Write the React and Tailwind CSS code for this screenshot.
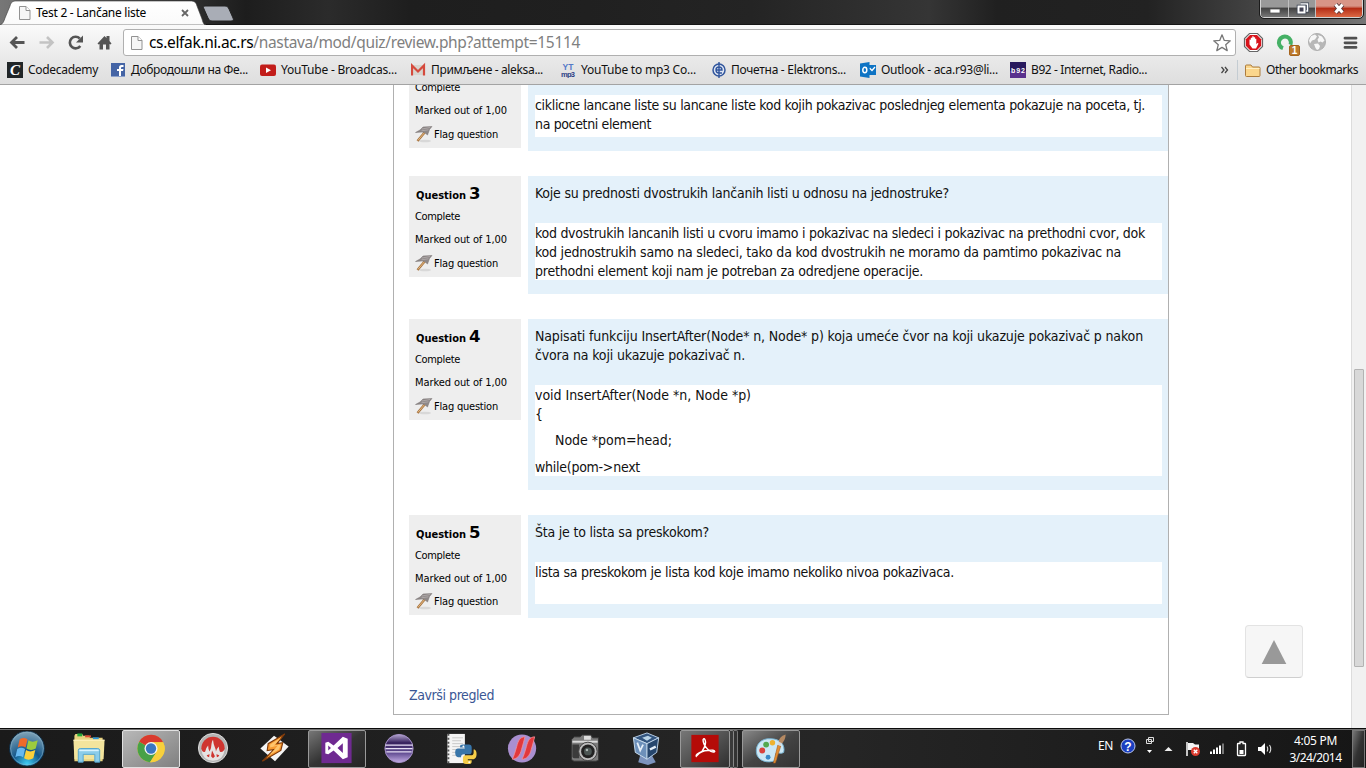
import { useLayoutEffect, useRef } from "react";

/* Single line of text spread to a given width by letter spacing. */
function Line({ w, className = "", children }) {
  const ref = useRef(null);
  useLayoutEffect(() => {
    const el = ref.current;
    el.style.letterSpacing = "0px";
    const natural = el.getBoundingClientRect().width;
    el.style.letterSpacing = (w - natural) / el.textContent.length + "px";
  }, [w]);
  return (
    <span className={"block w-max whitespace-pre " + className} ref={ref}>
      {children}
    </span>
  );
}

const ui = "font-['Noto_Sans','Open_Sans',sans-serif]";

function PageIcon() {
  return (
    <svg width="12" height="16" viewBox="0 0 12 16" className="shrink-0">
      <path d="M.5 1.5h6.5l4 4v9h-10.500z" fill="#f6f6f6" stroke="#929292" />
      <path d="M7 1.500v4h4" fill="#fff" stroke="#929292" />
    </svg>
  );
}

function WindowButtons() {
  return (
    <div className="absolute left-[1260px] top-0 flex h-[18px] w-[103px] overflow-hidden rounded-b-[4px] border border-t-0 border-[#d3d3d3] bg-[#555] outline outline-[#1b1b1b]">
      <div className="flex w-[28px] items-center justify-center border-r border-[#c0c0c0] bg-linear-to-b from-[#999] from-40% via-[#444] via-50% to-[#777]">
        <svg width="12" height="16"><rect x="1" y="8" width="10" height="4" fill="#fff" stroke="#555" strokeWidth=".8" /></svg>
      </div>
      <div className="flex w-[27px] items-center justify-center border-r border-[#c0c0c0] bg-linear-to-b from-[#999] from-40% via-[#444] via-50% to-[#777]">
        <svg width="13" height="15" viewBox="0 0 13 15">
          <path d="M4.500 3h7v7h-2" fill="none" stroke="#384050" strokeWidth="3" />
          <path d="M4.500 3h7v7h-2" fill="none" stroke="#fff" strokeWidth="1.500" />
          <rect x="2.500" y="5.500" width="6" height="6" fill="#445" stroke="#384050" strokeWidth="3.500" />
          <rect x="2.500" y="5.500" width="6" height="6" fill="#445" stroke="#fff" strokeWidth="2" />
        </svg>
      </div>
      <div className="flex flex-1 items-center justify-center bg-linear-to-b from-[#d89587] from-35% via-[#b52d16] via-50% to-[#dc6844]">
        <svg width="14" height="14" viewBox="0 0 14 14">
          <path d="M3.500 2.500l7 8M10.500 2.500l-7 8" stroke="#583a3c" strokeWidth="4.800" />
          <path d="M3.500 2.500l7 8M10.500 2.500l-7 8" stroke="#fff" strokeWidth="3" />
        </svg>
      </div>
    </div>
  );
}

function TabStrip() {
  return (
    <div className="relative flex h-[25px] bg-[#202020]">
      <svg width="1366" height="25" className="absolute left-0 top-0">
        <defs>
          <linearGradient id="shine" x1="0" x2="1">
            <stop offset="0" stopColor="#777" />
            <stop offset=".15" stopColor="#2a2a2a" />
            <stop offset=".18" stopColor="#1d1d1d" />
            <stop offset=".24" stopColor="#2b2b2b" />
            <stop offset=".3" stopColor="#1e1e1e" />
            <stop offset=".43" stopColor="#202020" />
            <stop offset=".55" stopColor="#242424" />
            <stop offset=".68" stopColor="#353535" />
            <stop offset=".73" stopColor="#202020" />
            <stop offset=".84" stopColor="#222" />
            <stop offset=".92" stopColor="#444" />
            <stop offset="1" stopColor="#777" />
          </linearGradient>
          <linearGradient id="tabfill" x2="0" y2="1">
            <stop stopColor="#fff" />
            <stop offset="1" stopColor="#fafafa" />
          </linearGradient>
        </defs>
        <rect width="1366" height="25" fill="url(#shine)" />
        <path d="M0 25c3-1 4-4 5-7l5-12c1-4 3-5 6-5h174c4 0 6 1 7 5l5 13c1 4 2 6 4 6z" fill="url(#tabfill)" stroke="#3b3b3b" strokeWidth=".6" />
        <path d="M205 6h20c2 0 3 1 4 3l4 9c1 2 0 3-2 3h-19c-2 0-3-1-4-3l-4-9c-1-2-1-3 1-3z" fill="#a9adb6" stroke="#222" />
        <path d="M206 24.500H1366" stroke="#151515" />
      </svg>
      <div className={"relative ml-[19px] flex items-center pt-px text-[12px] text-black " + ui}>
        <PageIcon />
        <Line w={110} className="ml-[5px]">Test 2 - Lančane liste</Line>
        <svg width="8" height="8" viewBox="0 0 8 8" className="ml-[35px]">
          <path d="M1 1l6 6M7 1l-6 6" stroke="#666" strokeWidth="1.800" />
        </svg>
      </div>
      <WindowButtons />
    </div>
  );
}

function NavIcons() {
  return (
    <svg width="122" height="35" viewBox="0 25 122 35" className="shrink-0">
      <path d="M24.500 42.500H12M17 37l-5.500 5.500L17 48" fill="none" stroke="#555" strokeWidth="2.800" />
      <path d="M39.500 42.500H52M47 37l5.500 5.500L47 48" fill="none" stroke="#c3c3c3" strokeWidth="2.600" />
      <path d="M80.300 46a5.800 5.800 0 1 1-.5-7.500" fill="none" stroke="#555" strokeWidth="2.600" />
      <path d="M83 35.500v7h-7z" fill="#555" />
      <path d="M97.500 43.500l7-7.500 2 2v-2h3v5l2 2.500-1 1-1-.5v5.500h-3.500v-5h-3v5h-3.500v-5.500l-1 .5z" fill="#555" />
    </svg>
  );
}

function Toolbar() {
  return (
    <div className={"flex h-[35px] bg-linear-to-b from-[#fafafa] to-[#e9e9e9] " + ui}>
      <NavIcons />
      <div className="ml-[1px] mt-[4px] flex h-[27px] w-[1113px] items-center rounded-[3px] border border-[#b0b0b0] bg-white pl-[7px]">
        <PageIcon />
        <Line w={431} className="ml-[6px] text-[15.500px] text-[#808080]">
          <span className="text-black">cs.elfak.ni.ac.rs</span>/nastava/mod/quiz/review.php?attempt=15114
        </Line>
        <svg width="20" height="20" viewBox="0 0 20 20" className="ml-auto mr-[3px]">
          <path d="M10 1.800l2.300 5.600 6 .4-4.600 3.900 1.500 5.900-5.200-3.200-5.200 3.200 1.500-5.900-4.600-3.900 6-.4z" fill="#fff" stroke="#777" strokeWidth="1.300" strokeLinejoin="round" />
        </svg>
      </div>
      <svg width="130" height="35" viewBox="1236 25 130 35" className="shrink-0">
        <path d="M1249.500 33.500h8l5 5v8l-5 5h-8l-5-5v-8z" fill="#fff" stroke="#666" strokeWidth="1.200" />
        <path d="M1250 35h7l4.200 4.200v6.600l-4.200 4.200h-7l-4.200-4.200v-6.600z" fill="#d8141c" />
        <path d="M1249.500 39.500v5l3 4h3.500l2.500-5-1.200-.6-1 1.400v-5.500h-1.200v-1.500h-1.500v-1h-1.300v1.500h-1.500v2z" fill="#fff" />
        <path d="M1283 48.200a6 6 0 1 1 7.500-3.500" fill="none" stroke="#45b065" strokeWidth="4" />
        <rect x="1289.500" y="45.500" width="10" height="10" rx="1.500" fill="#bd7b2d" stroke="#a5631c" />
        <text x="1294.500" y="54" fontSize="10" fontWeight="bold" textAnchor="middle" fill="#fff" fontFamily="Liberation Sans">1</text>
        <circle cx="1317" cy="42" r="8.500" fill="#b7b7b7" stroke="#b0b0b0" />
        <path d="M1311 36l4-1.500 2 2-2 3-3 1-2 3-1-3zM1318 35l4 1.500 2.500 4-2 2-2-1-2 1-1-3 1.500-2zM1314 44l4-.5 2 2.500-1 3-2 1-1.500-2z" fill="#f7f7f7" />
        <path d="M1345 38.200h11M1345 42.800h11M1345 47.400h11" stroke="#505050" strokeWidth="2.800" strokeLinecap="round" />
      </svg>
    </div>
  );
}

const bookmarkIcons = {
  code: (
    <>
      <rect width="16" height="16" fill="#202527" />
      <text x="8" y="13" textAnchor="middle" fontSize="15" fontStyle="italic" fontWeight="bold" fontFamily="Liberation Serif" fill="#fff">C</text>
    </>
  ),
  fb: (
    <>
      <rect y="1" width="14" height="14" fill="#4464a5" />
      <path d="M0 14.500h14" stroke="#8ba0cb" />
      <path d="M8 14V9H6V7h2V5.500Q8 3 10.500 3H12.500v2H11q-1 0-1 1v1h2.500L12 9h-2v5z" fill="#fff" />
    </>
  ),
  yt: (
    <>
      <rect y="2.500" width="16" height="11.500" rx="2" fill="#c21d1a" />
      <path d="M6 5.500l5 2.800-5 2.800z" fill="#fff" />
    </>
  ),
  gmail: (
    <>
      <path d="M0 3h14v10H0z" fill="#d8d5cf" />
      <path d="M1 13.500V3.500l6 6 6-6v10" fill="none" stroke="#d54a3d" strokeWidth="2.200" />
    </>
  ),
  mp3: (
    <g fontFamily="Liberation Sans" fontWeight="bold" textAnchor="middle">
      <text x="7" y="7.500" fontSize="8.500" fill="#5479c8">YT</text>
      <text x="7" y="14.500" fontSize="7.500" fill="#2c3e86" textLength="14">mp3</text>
    </g>
  ),
  el: (
    <>
      <circle cx="7" cy="8" r="6" fill="#dfe6f3" stroke="#31569d" strokeWidth="1.500" />
      <path d="M7 0v16M4 8h6q0-3-3-3t-3 3 3 3h3" fill="none" stroke="#31569d" strokeWidth="1.400" />
    </>
  ),
  outlook: (
    <>
      <rect x="8" y="3.500" width="7.500" height="9" fill="#0f74c4" stroke="#0f74c4" />
      <path d="M9.500 6l2.500 2.500 3-3.500" fill="none" stroke="#fff" strokeWidth="1.300" />
      <path d="M0 1.500L9.500 0v16L0 14.500z" fill="#0f74c4" />
      <ellipse cx="4.800" cy="8" rx="2" ry="2.700" fill="none" stroke="#fff" strokeWidth="1.500" />
    </>
  ),
  b92: (
    <>
      <rect width="16" height="16" fill="#28195d" />
      <rect y="9" width="16" height="7" fill="#59308d" />
      <text x="8" y="10.500" textAnchor="middle" fontSize="7" fontWeight="bold" fontFamily="Liberation Sans" fill="#fff" textLength="14">b92</text>
    </>
  ),
};

const bookmarks = [
  { icon: "code", text: "Codecademy", w: 70, pos: "w-[104px]", gap: "w-[21px]" },
  { icon: "fb", text: "Добродошли на Фе...", w: 117, pos: "w-[149px]", gap: "w-[20px]" },
  { icon: "yt", text: "YouTube - Broadcas...", w: 116, pos: "w-[151px]", gap: "w-[21px]" },
  { icon: "gmail", text: "Примљене - aleksa...", w: 112, pos: "w-[150px]", gap: "w-[20px]" },
  { icon: "mp3", text: "YouTube to mp3 Co...", w: 115, pos: "w-[151px]", gap: "w-[20px]" },
  { icon: "el", text: "Почетна - Elektrons...", w: 115, pos: "w-[148px]", gap: "w-[19px]" },
  { icon: "outlook", text: "Outlook - aca.r93@li...", w: 117, pos: "w-[150px]", gap: "w-[21px]" },
  { icon: "b92", text: "B92 - Internet, Radio...", w: 116, pos: "w-[211px]", gap: "w-[21px]" },
];

function Bookmarks() {
  return (
    <div className={"flex h-[25px] items-center border-b border-[#a3a3a3] bg-linear-to-b from-[#e8e8e8] to-[#dedede] pb-[4px] pl-[7px] text-[12px] leading-[20px] text-[#111] " + ui}>
      {bookmarks.map((b) => (
        <div key={b.icon} className={"flex shrink-0 items-center " + b.pos}>
          <div className={"shrink-0 " + b.gap}>
            <svg width="16" height="16">{bookmarkIcons[b.icon]}</svg>
          </div>
          <Line w={b.w}>{b.text}</Line>
        </div>
      ))}
      <svg width="8" height="8" viewBox="0 0 8 8">
        <path d="M.5 1l2.500 3-2.500 3M4 1l2.500 3L4 7" fill="none" stroke="#444" strokeWidth="1.300" />
      </svg>
      <div className="ml-[8px] h-[20px] w-px bg-[#c4ccd2]" />
      <svg width="16" height="15" viewBox="0 0 16 15" className="ml-[7px]">
        <path d="M.5 12.500V3q0-1 1-1h4.500l1.500 2H14q1 0 1 1v7.500q0 1-1 1H1.500q-1 0-1-1z" fill="#fbd68c" stroke="#ac7c3d" />
        <path d="M1 5.500h13.500" stroke="#fff0c4" />
      </svg>
      <Line w={92} className="ml-[5px]">Other bookmarks</Line>
    </div>
  );
}

function FlagIcon() {
  return (
    <svg width="18" height="18" viewBox="0 0 18 18" className="shrink-0">
      <ellipse cx="10" cy="15" rx="6" ry="1.300" fill="#d8d8d8" />
      <path d="M2.500 15L10 6" stroke="#a77543" strokeWidth="2.400" />
      <path d="M3 14.300L10 6" stroke="#ecc083" strokeWidth=".9" />
      <path d="M.5 6.500L5 4l3-3 9-.500-2.500 3L12.500 9 9.500 6.500 7 6z" fill="#8f8989" stroke="#777171" strokeWidth=".5" />
      <path d="M7 3l8-1.500M6.500 4.800l7-1" stroke="#b5afaf" strokeWidth=".8" />
    </svg>
  );
}

const tahoma = "font-['DejaVu_Sans_Condensed','DejaVu_Sans','Noto_Sans',sans-serif]";

function Info({ n, last }) {
  return (
    <div className={"w-[112px] shrink-0 bg-[#eee] pl-[6px] text-[11px] leading-[14px] text-black " + (last ? "h-[100px]" : "h-[101px]")}>
      <div className="flex h-[34px] items-baseline gap-[3px] pl-px pt-[8px] font-bold">
        {n && (
          <>
            <Line w={50}>Question</Line>
            <Line w={11} className="font-['DejaVu_Sans',sans-serif] text-[16.500px] leading-[20px]">{n}</Line>
          </>
        )}
      </div>
      <Line w={45}>Complete</Line>
      <Line w={92} className="mt-[9px]">Marked out of 1,00</Line>
      <div className={"flex items-center " + (last ? "mt-[7px]" : "mt-[8px]")}>
        <FlagIcon />
        <Line w={64} className="ml-px">Flag question</Line>
      </div>
    </div>
  );
}

function Question({ n, prompt, height, answer, answerHeight, last }) {
  return (
    <div className="mb-[25px] flex items-start gap-[7px]">
      <Info n={n} last={last} />
      <div className={"w-[640px] bg-[#e4f1fa] pl-[7px] pt-[8px] " + height}>
        {prompt}
        <div className={"mr-[6px] mt-[20px] bg-white pt-px " + answerHeight}>{answer}</div>
      </div>
    </div>
  );
}

function Page() {
  return (
    <div className="flex h-[643px] overflow-hidden bg-white">
      <div className="ml-[393px] h-[630px] w-[776px] overflow-hidden border border-t-0 border-[#b0b0b0] pl-[15px]">
        <div className={"-mt-[38px] text-[14px] leading-[19px] text-[#111] " + tahoma}>
          <Question
            height="h-[104px]"
            answerHeight="h-[42px]"
            prompt={<div className="h-[20px]" />}
            answer={
              <>
                <Line w={610}>ciklicne lancane liste su lancane liste kod kojih pokazivac poslednjeg elementa pokazuje na poceta, tj.</Line>
                <Line w={116}>na pocetni element</Line>
              </>
            }
          />
          <Question
            n="3"
            height="h-[118px]"
            answerHeight="h-[57px]"
            prompt={<Line w={414}>Koje su prednosti dvostrukih lančanih listi u odnosu na jednostruke?</Line>}
            answer={
              <>
                <Line w={610}>kod dvostrukih lancanih listi u cvoru imamo i pokazivac na sledeci i pokazivac na prethodni cvor, dok</Line>
                <Line w={586}>kod jednostrukih samo na sledeci, tako da kod dvostrukih ne moramo da pamtimo pokazivac na</Line>
                <Line w={388}>prethodni element koji nam je potreban za odredjene operacije.</Line>
              </>
            }
          />
          <Question
            n="4"
            height="h-[171px]"
            answerHeight="h-[91px]"
            prompt={
              <>
                <Line w={608}>Napisati funkciju InsertAfter(Node* n, Node* p) koja umeće čvor na koji ukazuje pokazivač p nakon</Line>
                <Line w={210}>čvora na koji ukazuje pokazivač n.</Line>
              </>
            }
            answer={
              <>
                <Line w={216}>void InsertAfter(Node *n, Node *p)</Line>
                <Line w={7}>{"{"}</Line>
                <Line w={117} className="ml-[20px] mt-[7px]">Node *pom=head;</Line>
                <Line w={105} className="mt-[8px]">{"while(pom->next"}</Line>
              </>
            }
          />
          <Question
            n="5"
            last
            height="h-[103px]"
            answerHeight="h-[42px]"
            prompt={<Line w={174}>Šta je to lista sa preskokom?</Line>}
            answer={<Line w={419}>lista sa preskokom je lista kod koje imamo nekoliko nivoa pokazivaca.</Line>}
          />
          <Line w={85} className="mt-[68px] text-[#3a5795]">Završi pregled</Line>
        </div>
      </div>
      <div className="ml-[76px] mt-[540px] flex h-[53px] w-[58px] items-center justify-center rounded-[4px] border border-[#e3e3e3] border-b-[#cfcfcf] bg-[#f6f6f6]">
        <svg width="26" height="26"><path d="M13 1l12.300 24H.7z" fill="#999" /></svg>
      </div>
      <div className="ml-auto w-[15px] border-l border-[#dcdcdc] bg-[#f1f1f1] pl-[2px] pt-[284px]">
        <div className="h-[298px] w-[10px] rounded-[1px] border border-[#b3b3b3] bg-[#d8d8d8]" />
      </div>
    </div>
  );
}

/* Taskbar drawings, each on a 36 by 36 field. */
const apps = {
  start: (
    <>
      <defs>
        <radialGradient id="orb" cx=".5" cy=".95" r=".9">
          <stop stopColor="#3fd0f8" />
          <stop offset=".45" stopColor="#14578a" />
          <stop offset="1" stopColor="#7b9fb4" />
        </radialGradient>
      </defs>
      <circle cx="18" cy="18" r="18" fill="url(#orb)" stroke="#0c2a42" />
      <circle cx="18" cy="18" r="16.800" fill="none" stroke="#8db5c9" strokeOpacity=".5" />
      <path d="M10.500 8.500q4-2.500 8 0l-2 8.500q-4-2.500-8 0z" fill="#ee6a2b" />
      <path d="M19.500 9.500q4 3 9.500 0l-2 8.500q-5 3-9.500 0z" fill="#9ccc3e" />
      <path d="M8 18.500q4-2.500 8 0l-2 8.500q-4-2.500-8 0z" fill="#66b8f0" />
      <path d="M17 19.500q4 3 9.500 0l-2 8.500q-5 3-9.500 0z" fill="#fbcf3a" />
    </>
  ),
  explorer: (
    <>
      <path d="M4 3h7l1 2h6l1 2h13v24H3V5z" fill="#e8d37f" />
      <path d="M6 2.500h5v3H6z" fill="#24a83a" />
      <path d="M14 4.500h6v2h-6z" fill="#e14b34" />
      <path d="M22 6.500h6v2h-6z" fill="#2d95d4" />
      <path d="M2 9h32l-1 20H3z" fill="#f3e49d" />
      <path d="M2 9.500h32" stroke="#fff3c3" />
      <path d="M7 32V20q0-2 2-2h18q2 0 2 2v12h-5v-8H12v8z" fill="#8ccdea" stroke="#55a7cf" />
      <path d="M8 20h20" stroke="#d8f3ff" strokeWidth="1.500" />
    </>
  ),
  chrome: (
    <>
      <circle cx="18" cy="18" r="14" fill="#f5cc31" />
      <path d="M18 18L5.900 11A14 14 0 0 1 30.500 11.500H18z" fill="#d93a2e" />
      <path d="M5.900 11A14 14 0 0 0 17 32l6-9.500-5-4.500z" fill="#47a147" />
      <path d="M30.500 11.500H18v6l5.500 4.500L17 32A14 14 0 0 0 30.500 11.500z" fill="#f7d03c" />
      <circle cx="18" cy="18" r="6.700" fill="#f3f3f3" />
      <circle cx="18" cy="18" r="5.300" fill="#3976c2" />
    </>
  ),
  nero: (
    <>
      <circle cx="18" cy="17.500" r="15" fill="#b4b4b4" stroke="#dcdcdc" />
      <path d="M6 18a12 12 0 0 1 24 0l-2 6H8z" fill="#cf3530" />
      <path d="M6 19q2 4 4 2 1-4 3-6 0 4 1.500 6 2-4 2-8 .5-3 1.500-4 .5 5 2 8 1 2 1 4 1-3 3-5 0 3 1 5 2 2 5-2-1 11-12 11.500Q7 30 6 19z" fill="#e6e3e3" />
      <path d="M11.500 25q1 2 2.500 2l.5-3zM17 20l-1 6 2 2 2-2zM24.500 25q-1 2-2.500 2l-.5-3z" fill="#cf3530" />
    </>
  ),
  winamp: (
    <>
      <path d="M17 5l15 11-14 15L3 18z" fill="#f5f5f5" />
      <path d="M28 3L11 13l-1 7 7-1L5 31l19-11 2-8-6 1z" fill="#f99a31" stroke="#7f3a0a" strokeWidth="1.200" />
      <path d="M24 7l-11 7v3l8-2-9 10 10-6 2-5-7 1z" fill="#ffc56d" />
    </>
  ),
  vs: (
    <>
      <rect x="2" y="2" width="31" height="31" fill="#6f2a91" />
      <path d="M6 12l3-1 5.500 4L24 6l5 2v19l-5 2-9.500-9L9 24l-3-1z" fill="#fff" />
      <path d="M9 15v5l2.800-2.500zM24 12.500L18.500 17.500l5.500 5z" fill="#6f2a91" />
    </>
  ),
  eclipse: (
    <>
      <defs>
        <linearGradient id="ecl" x2="0" y2="1">
          <stop stopColor="#b5a6d0" /><stop offset=".3" stopColor="#35205c" /><stop offset=".65" stopColor="#5f4a90" /><stop offset="1" stopColor="#c5aee6" />
        </linearGradient>
      </defs>
      <circle cx="18" cy="18" r="14.500" fill="url(#ecl)" stroke="#a792c8" />
      <path d="M4 14.500h28M4 18h28M5 21.500h26" stroke="#e7e0f5" strokeWidth="1.300" />
    </>
  ),
  python: (
    <>
      <path d="M4 3h18v30H4z" fill="#f4f4f4" />
      <path d="M5 3v30" stroke="#555" strokeDasharray="2 2" strokeWidth="2" />
      <path d="M9 7h11M9 10h9M9 13h11M9 16h8M9 19h7M9 22h4M9 25h6" stroke="#c9c9c9" />
      <path d="M20 14h6q3 0 3 3v4q0 3-3 3h-5q-3 0-3 3h-3q-3-1-3-5t3-4h7v-1h-5v-1q0-2 3-2z" fill="#3875a9" />
      <path d="M27 34h-4q-3 0-3-3v-3q0-3 3-3h5q3 0 3-3v-3h1q2 1 2 5t-3 5h-6v1h4v1q0 3-2 3z" fill="#f6ce49" />
      <circle cx="20.500" cy="16" r="1" fill="#fff" />
      <circle cx="26.500" cy="32" r="1" fill="#fff" />
    </>
  ),
  slash: (
    <>
      <circle cx="17" cy="18" r="14.500" fill="#a98fd0" />
      <path d="M7 29C9 25 10 21 11.500 16 13 10 15 6 20 6c-1 4-2 8-3.500 13C15 25 12 29 7 29zM17 29c2-4 3-8 4.500-13C23 10 25 6 30 6c-1 4-2 8-3.500 13C25 25 22 29 17 29z" fill="#e1383c" stroke="#f3939a" strokeWidth=".8" />
    </>
  ),
  camera: (
    <>
      <path d="M4 9l3-3h6l2-2h9l2 3h6v22q0 2-3 2H7q-3 0-3-3z" fill="#7b7b7b" stroke="#333" />
      <path d="M5 11h26" stroke="#dadada" strokeWidth="2" />
      <rect x="17" y="5" width="7" height="4" fill="#ddd" />
      <path d="M5 14h7v14H7q-2 0-2-2z" fill="#3b3b3b" />
      <circle cx="21" cy="21" r="9.500" fill="#bcbcbc" stroke="#444" />
      <circle cx="21" cy="21" r="7" fill="#222" />
      <circle cx="21" cy="21" r="4" fill="#4b5553" />
      <circle cx="20" cy="19.500" r="1.300" fill="#a9b5b2" />
    </>
  ),
  vbox: (
    <>
      <path d="M11 25h12l4 7-8 3-10-3z" fill="#7c93bd" />
      <path d="M4 7l14-5 12 5-12 6z" fill="#33557f" stroke="#b8cee4" />
      <path d="M4 7l14 6v16L6 22z" fill="#6d90ba" stroke="#c8dced" />
      <path d="M18 13l12-6-2 15-10 7z" fill="#26466d" stroke="#bbd0e5" />
      <path d="M8 12l3 8 3-6" fill="none" stroke="#e4eef8" strokeWidth="1.800" />
      <path d="M21 19l6-3" fill="none" stroke="#e4eef8" strokeWidth="2.500" />
      <path d="M13 7l6-2 4 2-5 3z" fill="#b8d4e8" />
    </>
  ),
  acrobat: (
    <>
      <rect x="4" y="4" width="28" height="28" fill="#b50b08" />
      <path d="M9 26q-1-2 6-5 5-8 3-12-1-2-2 0 0 5 5 10 5 4 7 2 0-2-7-1-7 0-11 5z" fill="none" stroke="#fff" strokeWidth="1.500" />
    </>
  ),
  paint: (
    <>
      <path d="M18 8C8 7 2 14 3 22c1 9 12 12 20 8 2-2-2-5 0-7 2-1 5 1 8-1C33 14 27 8 18 8z" fill="#cce8f5" stroke="#76b2d1" />
      <circle cx="9" cy="20" r="3" fill="#d9433d" />
      <circle cx="13" cy="14" r="3" fill="#53a950" />
      <circle cx="19.500" cy="12" r="2.800" fill="#eeb22f" />
      <circle cx="15" cy="27" r="2.500" fill="#398ac7" />
      <path d="M20.500 33l4.500-18.500 3 1L22.500 33z" fill="#e58f31" stroke="#9d5a22" strokeWidth=".6" />
      <path d="M25 14.500l1-4 3.500 1-1.500 4z" fill="#d8d8d8" />
      <path d="M26 11q0-5 7-7.500 0 5-3.500 9z" fill="#b58962" />
    </>
  ),
};

const buttonLook = {
  chrome: "border-[#e0e0e0] bg-linear-to-br from-[#b8b8b8] to-[#808080]",
  vs: "border-[#9a9a9a] bg-linear-to-br from-[#777] via-[#343434] to-[#252525]",
  acrobat: "border-[#999] bg-linear-to-br from-[#777] to-[#303030]",
  paint: "border-[#999] bg-linear-to-br from-[#888] via-[#444] to-[#333]",
};

function Taskbar() {
  return (
    <div className={"flex h-[40px] border-t border-[#0b0b0b] bg-linear-to-r from-[#1a1a1a] from-0% via-[#262626] via-60% to-[#161616] text-white " + ui}>
      <div className="flex w-full border-t border-[#707070]">
        {Object.keys(apps).map((key) => (
          <div key={key} className={"flex shrink-0 items-center " + (key === "start" ? "w-[58px] pl-[9px]" : key === "acrobat" ? "w-[62px] pl-[2px]" : "w-[62px] justify-center")}>
            <div
              className={
                "flex h-[38px] items-center justify-center " +
                (key === "acrobat" ? "w-[50px] " : key === "start" ? "w-[36px] " : "w-[58px] ") +
                (buttonLook[key] ? "rounded-[2px] border " + buttonLook[key] : "")
              }
            >
              <svg width="36" height="36" viewBox="-.5 0 37 37" className="shrink-0">{apps[key]}</svg>
            </div>
            {key === "acrobat" && (
              <>
                <div className="h-[38px] w-[4px] rounded-r-[2px] border border-l-0 border-[#888] bg-[#3a3a3a]" />
                <div className="h-[38px] w-[4px] rounded-r-[2px] border border-l-0 border-[#777] bg-[#333]" />
              </>
            )}
          </div>
        ))}
        <div className="ml-[296px] pt-[8px] text-[12px] leading-[16px]">
          <Line w={15}>EN</Line>
        </div>
        <svg width="164" height="38" viewBox="1116 730 164 38" className="ml-[3px] shrink-0">
          <circle cx="1128" cy="746" r="7" fill="#1b3fc0" stroke="#b9c5e8" />
          <text x="1128" y="750.500" fontSize="12" fontWeight="bold" textAnchor="middle" fill="#fff" fontFamily="Liberation Sans">?</text>
          <path d="M1148.500 737.500h5v4h-5zM1146.500 739.500h5v4h-5z" fill="#222" stroke="#ddd" />
          <path d="M1147 750h5l-2.500 3z" fill="#fff" />
          <path d="M1164.500 751l4-4 4 4z" fill="#eee" />
          <path d="M1187 742v14" stroke="#fff" strokeWidth="1.500" />
          <path d="M1188 743h5l2 1.500h4v7h-5l-2-1.500h-4z" fill="#f5f5f5" />
          <circle cx="1195.500" cy="751.500" r="4.500" fill="#dc3c2f" />
          <path d="M1193.800 749.800l3.500 3.500M1197.300 749.800l-3.500 3.500" stroke="#fff" strokeWidth="1.400" />
          <path d="M1211 751.500v2.500M1214 749.500v4.500M1217 747.500v6.500M1220 745.500v8.500" stroke="#fff" strokeWidth="2" />
          <path d="M1223 743.500v10.500" stroke="#777" strokeWidth="2" />
          <path d="M1239 743.500h1v-1.500h3v1.500h2q.5 0 .5.500v11q0 .5-.5.500h-7q-.5 0-.5-.5v-11q0-.5.500-.5z" fill="#222" stroke="#fff" strokeWidth="1.300" />
          <path d="M1239.500 750h4v4h-4z" fill="#fff" />
          <path d="M1258 747h3l4-4v12l-4-4h-3z" fill="#fff" />
          <path d="M1267 746.500q1.500 2.500 0 5M1269.500 745q2.500 4 0 8" fill="none" stroke="#ddd" strokeWidth="1.100" />
        </svg>
        <div className="ml-[9px] flex w-[53px] flex-col items-center pt-[2px] text-[12px] leading-[17px]">
          <Line w={43}>4:05 PM</Line>
          <Line w={52}>3/24/2014</Line>
        </div>
        <div className="ml-auto mr-px h-[38px] w-[13px] border border-[#777] bg-linear-to-br from-[#777] via-[#333] to-[#222]" />
      </div>
    </div>
  );
}

export default function App() {
  return (
    <div className="h-[768px] w-[1366px] overflow-hidden">
      <TabStrip />
      <Toolbar />
      <Bookmarks />
      <Page />
      <Taskbar />
    </div>
  );
}
